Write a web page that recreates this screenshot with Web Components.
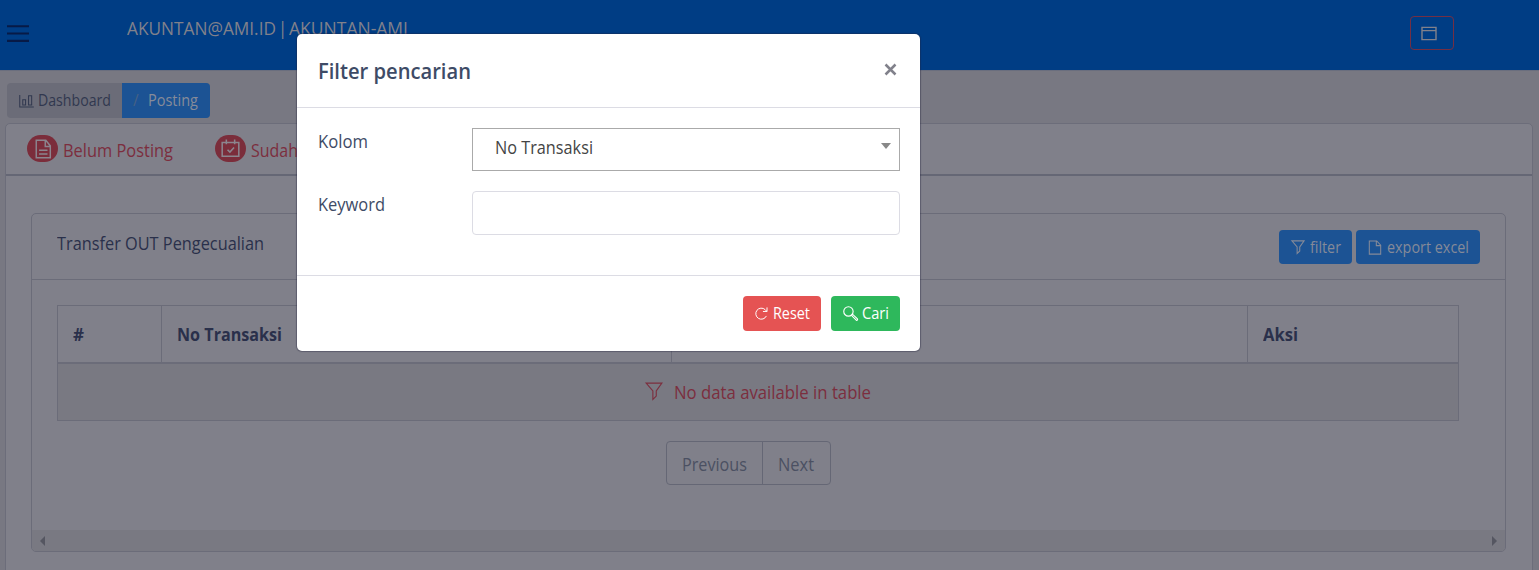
<!DOCTYPE html>
<html lang="id">
<head>
<meta charset="utf-8">
<title>Posting</title>
<style>
html,body{margin:0;height:100%;overflow:hidden;background:#787882;font-family:"Open Sans","Noto Sans",sans-serif;font-size:17.600px;color:#2a304b}
</style>
</head>
<body>
<app-page></app-page>
<script>
const ICONS={
 chart:'<path d="M.8 1v13.8H15.800M4 6.500h3v6H4zM10.200 2h3.300v10.500h-3.300z"/>',
 doc:'<path d="M1.500 1h8.500l4.500 4.500v9.500h-13zM9.500 1v5h5"/>',
 docLines:'<path d="M2 1h8.500l4 4.500v9.500H2zM10 1.500v4.500h4M4.500 9h7.500M4.500 12h7.500"/>',
 calendar:'<path d="M1 3h14v11.500H1zM4.500 .5v4M11.500 .5v4M5.500 9l2 2 3.500-3.800"/>',
 funnel:'<path d="M1 1h14L10 8v4.500L7 15.500V8z"/>',
 window:'<path d="M1 1.500h14v13h-14zM1 5h14"/>',
 reload:'<path d="M14 11A6.800 6.800 0 1 1 12.500 3.300L14.500 5.300M14.800 .5v5h-5"/>',
 search:'<circle cx="5.800" cy="5.800" r="5"/><path d="M9.200 10.200l1.200-1.200 5 4.800c.6 1-.5 1.800-1.300 1.300z"/>',
 burger:'<path d="M0 2h16M0 8.500h16M0 15h16"/>'
};
function define(name,css,html,after){
 const t=document.createElement('template');
 t.innerHTML=`<style>*{box-sizing:border-box}${css}</style>${html}`;
 customElements.define(name,class extends HTMLElement{
  constructor(){super();this.attachShadow({mode:'open'}).append(t.content.cloneNode(true));}
  connectedCallback(){if(after)after.call(this);}
 });
}
define('ui-icon',':host{display:inline-flex;flex:none}svg{display:block;fill:none;stroke:currentColor;overflow:visible}','<svg viewBox="0 0 16 16"></svg>',function(){
 const s=this.shadowRoot.querySelector('svg');
 s.setAttribute('width',this.getAttribute('w')||14);
 s.setAttribute('height',this.getAttribute('h')||this.getAttribute('w')||14);
 s.setAttribute('preserveAspectRatio','none');
 s.style.strokeWidth=this.getAttribute('stroke')||1.2;
 s.innerHTML=ICONS[this.getAttribute('name')];
});
/* Label condensed so that it fills the given width */
define('fit-label',':host{display:inline-block;flex:none;white-space:nowrap}span{display:inline-block;transform-origin:0 50%}','<span><slot></slot></span>',function(){
 const w=+this.getAttribute('w'),s=this.shadowRoot.querySelector('span');
 s.style.transform=`scaleX(${w/s.getBoundingClientRect().width})`;
 this.style.width=w+'px';
});
define('ui-button',':host{display:inline-flex;align-items:center;justify-content:center;gap:5px;height:34px;border-radius:4px;background:var(--bg,#1c5394);color:var(--fg,#858a98);font-size:15.400px;line-height:22px}::slotted(fit-label){padding-top:1px}','<slot></slot>');
define('app-header',`:host{display:flex;height:71px;background:#003d84;border-bottom:1px solid #6a6e7e;color:#81818b}
.burger{margin:23px 0 0 7px;color:#071a46}
.user{display:flex;gap:6px;margin:15px 0 0 98px;line-height:26px}
.btn{display:flex;align-items:flex-start;margin:16px 85px 0 auto;width:44px;height:34px;border:1px solid #742f43;border-radius:4px;padding:9px 0 0 10px}`,
`<div class="burger"><ui-icon name="burger" w="22" h="18" stroke="1.800"></ui-icon></div>
<div class="user"><fit-label w="149">AKUNTAN@AMI.ID</fit-label><span style="width:1px;display:flex;justify-content:center">|</span><fit-label w="119">AKUNTAN-AMI</fit-label></div>
<div class="btn"><ui-icon name="window" w="16" h="15" stroke="1.400"></ui-icon></div>`);
define('bread-crumb',`:host{display:flex;width:203px;height:35px;margin:12px 0 0 7px;border-radius:4px;overflow:hidden;font-size:15.400px;line-height:36px;background:#6b6c78}
.a{width:115px;padding-left:12px;display:flex;gap:4px;align-items:center;color:#31384f}
.b{flex:1;background:#1c5394;color:#868b99;padding-left:11px;display:flex;gap:9px}.s{color:#466184}`,
`<div class="a"><ui-icon name="chart" w="15" h="14" stroke="1.100"></ui-icon><fit-label w="73">Dashboard</fit-label></div><div class="b"><span class="s">/</span><fit-label w="50">Posting</fit-label></div>`);
define('tab-item',`:host{display:flex;align-items:flex-start;gap:5px;color:#7c2e3e;line-height:26px}
.i{width:31px;height:27px;border-radius:13.500px;background:#7b2d3b;color:#8b858e;display:flex;align-items:center;justify-content:center}
.t{padding-top:2px}`,'<div class="i"><slot name="icon"></slot></div><div class="t"><slot></slot></div>');
define('tab-bar',':host{display:flex;gap:42px;height:52px;padding:11px 0 0 21px;border-bottom:2px solid #656775}','<slot></slot>');
define('main-card',':host{display:block;width:1527.500px;height:460px;margin:5px 0 0 5px;border:1px solid #6c6d7a;border-radius:5px 5px 0 0;background:#80808a}','<slot></slot>');
define('data-table',`:host{display:block;width:1402px;margin:25px 0 0 25px;border:1px solid #6b6c79}
.h{display:grid;grid-template-columns:103px 510px 576px 1fr;height:58px;border-bottom:2px solid #6b6c79;font-weight:700;line-height:57px}
.h>div{padding-left:15px;border-left:1px solid #6b6c79}.h>div:first-child{border:0}
.r{height:56px;background:#797982;color:#7c2e3e;display:flex;align-items:center;justify-content:center;gap:11px}
.r ui-icon{margin-top:-2px}`,
`<div class="h"><div><fit-label w="11">#</fit-label></div><div><fit-label w="105">No Transaksi</fit-label></div><div></div><div><fit-label w="35">Aksi</fit-label></div></div>
<div class="r"><ui-icon name="funnel" w="18" h="18" stroke="1"></ui-icon><fit-label w="197">No data available in table</fit-label></div>`);
define('page-nav',`:host{display:flex;width:165px;height:44px;margin:20px 0 0 634px;border:1px solid #656775;border-radius:4px;color:#4b5062;line-height:45px}
.p{width:96px;padding-left:15px;border-right:1px solid #656775}.n{padding-left:15px}`,
`<div class="p"><fit-label w="65">Previous</fit-label></div><div class="n"><fit-label w="36">Next</fit-label></div>`);
define('scroll-strip',`:host{display:flex;justify-content:space-between;align-items:center;height:21px;padding:0 8px;background:#797982;color:#555661;border-radius:0 0 4px 4px}
i{border:5px solid transparent;border-left:0;border-right:5px solid}i+i{border-right:0;border-left:5px solid}`,'<i></i><i></i>');
define('table-card',`:host{display:flex;flex-direction:column;width:1475px;height:339px;margin:37px 0 0 25px;border:1px solid #6b6c79;border-radius:5px}
.head{display:flex;height:66px;border-bottom:1px solid #6b6c79;padding:16px 25px 0;gap:4px}
.title{flex:1;line-height:26px}
scroll-strip{margin-top:auto}`,
`<div class="head"><div class="title"><fit-label w="207">Transfer OUT Pengecualian</fit-label></div>
<ui-button style="width:73px"><ui-icon name="funnel" w="14" h="14"></ui-icon><fit-label w="31">filter</fit-label></ui-button>
<ui-button style="width:124px"><ui-icon name="doc" w="14" h="15"></ui-icon><fit-label w="82">export excel</fit-label></ui-button></div>
<data-table></data-table><page-nav></page-nav><scroll-strip></scroll-strip>`);
define('form-row',':host{display:flex}.l{width:154px;line-height:26px}.f{flex:1;height:var(--h,44px)}','<div class="l"><slot name="label"></slot></div><div class="f"><slot></slot></div>');
define('select-box',':host{display:flex;justify-content:space-between;height:43px;border:1px solid #aaa;padding:5px 8px 0 22px;line-height:26px;color:#444}i{margin-top:9px;height:0;border:5px solid transparent;border-top:6px solid #888;border-bottom:0}','<slot></slot><i></i>');
define('text-box',':host{display:block;height:44px;border:1px solid #dcdce4;border-radius:4px}','');
define('filter-dialog',`:host{position:absolute;left:297px;top:34px;width:623px;height:317px;background:#fff;border-radius:5px;display:flex;flex-direction:column;color:#3e4b66;box-shadow:0 0 1px 1px rgba(35,35,60,.38)}
.h{display:flex;justify-content:space-between;height:74px;border-bottom:1px solid #dcdce4;padding:19px 23px 0 21px}
.h fit-label{font-size:22px;font-weight:600;line-height:34px}
.x{margin-top:10px}
.b{height:168px;border-bottom:1px solid #dcdce4;padding:20px 20px 0 21px;display:flex;flex-direction:column;gap:20px;--h:43px}
.f{display:flex;justify-content:flex-end;gap:10px;padding:20px 20px 0;--fg:#fff}
.f ui-button{height:35px}`,
`<div class="h"><fit-label w="153">Filter pencarian</fit-label><svg class="x" width="13" height="13" viewBox="0 0 13 13" stroke="#81818b" stroke-width="2.500"><path d="M1.500 1.500l10 10M11.500 1.500l-10 10"/></svg></div>
<div class="b"><form-row><fit-label slot="label" w="50">Kolom</fit-label><select-box><fit-label w="98">No Transaksi</fit-label></select-box></form-row>
<form-row><fit-label slot="label" w="67">Keyword</fit-label><text-box></text-box></form-row></div>
<div class="f"><ui-button style="--bg:#e55353;width:78px"><ui-icon name="reload" w="13"></ui-icon><fit-label w="37">Reset</fit-label></ui-button>
<ui-button style="--bg:#2eb85c;width:69px;gap:4px"><ui-icon name="search" w="15"></ui-icon><fit-label w="27">Cari</fit-label></ui-button></div>`);
define('app-page',':host{display:block;height:570px;overflow:hidden;position:relative}',
`<app-header></app-header><bread-crumb></bread-crumb>
<main-card><tab-bar><tab-item><ui-icon slot="icon" name="docLines" w="18" h="20" stroke="1.300"></ui-icon><fit-label w="110">Belum Posting</fit-label></tab-item>
<tab-item><ui-icon slot="icon" name="calendar" w="19" h="19" stroke="1.300"></ui-icon><fit-label w="47">Sudah</fit-label></tab-item></tab-bar>
<table-card></table-card></main-card><filter-dialog></filter-dialog>`);
</script>
</body>
</html>
